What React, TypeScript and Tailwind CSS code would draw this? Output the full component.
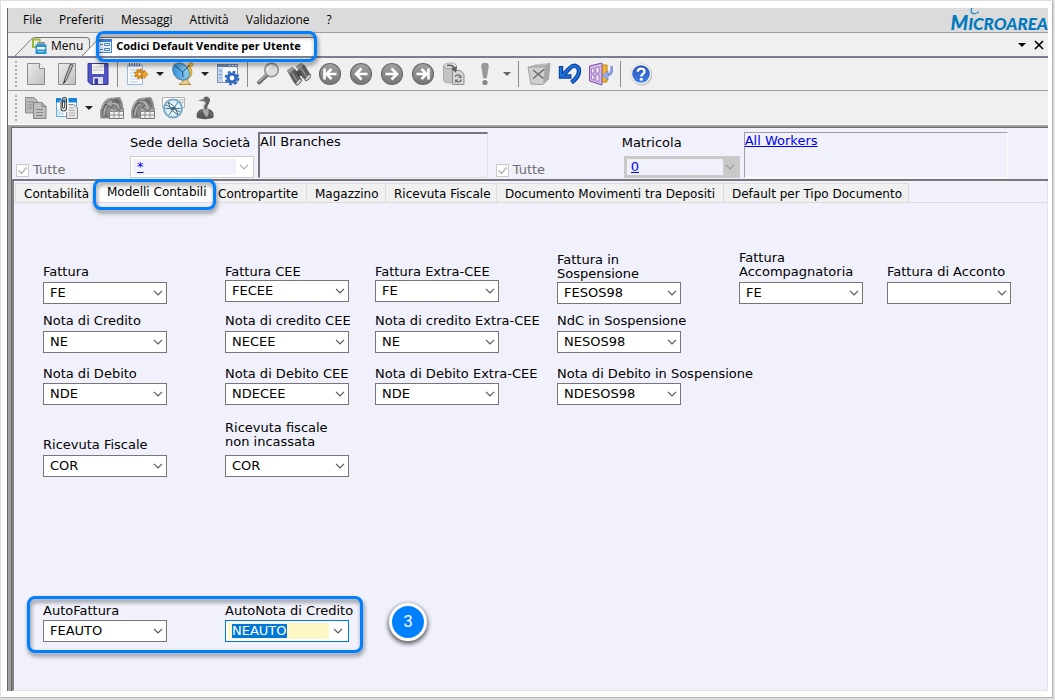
import type { ReactNode } from 'react';
import clsx from 'clsx';

const UI = "font-['Open_Sans','Noto_Sans',sans-serif]";

function Callout({ className }: { className: string }) {
  return (
    <span
      aria-hidden
      className={clsx(
        'pointer-events-none absolute z-10 rounded-lg border-3 border-[#0080ff] drop-shadow-[1px_3px_2px_rgba(0,0,0,0.5)]',
        className,
      )}
    />
  );
}

function Chevron({ className = 'text-[#555]' }: { className?: string }) {
  return (
    <svg viewBox="0 0 10 6" className={clsx('h-1.5 w-2.5', className)} fill="none" stroke="currentColor" strokeWidth="1.2" aria-hidden>
      <path d="M1 .8 5 4.8 9 .8" />
    </svg>
  );
}

/* ---------- toolbar icons, 24 x 24 ---------- */

function Svg({ children }: { children: ReactNode }) {
  return (
    <svg viewBox="0 0 24 24" className="size-6 shrink-0" fill="none" aria-hidden>
      {children}
    </svg>
  );
}

function NewIcon() {
  return (
    <Svg>
      <path d="M3.500 1.500h12L20.500 6.500v16h-17z" fill="url(#paper)" stroke="#8a8a8a" />
      <path d="M15.500 1.500v5h5" fill="#f8f8f8" stroke="#8a8a8a" />
    </Svg>
  );
}

function EditIcon() {
  return (
    <Svg>
      <path d="M3.500 1.500h17v21h-17z" fill="url(#paper)" stroke="#8f8f8f" />
      <path d="M15.500 2 10 16 8.500 21.500l3.500-4.500L18 3z" fill="#b5b5b5" stroke="#4c4c4c" strokeWidth=".9" />
      <path d="m8.300 22 1-3.500 1.500 1z" fill="#333" />
    </Svg>
  );
}

function SaveIcon() {
  return (
    <Svg>
      <path d="M2 1.500h20v21H5l-3-3z" fill="#5054c4" stroke="#35399c" />
      <path d="M6 2h12v10H6z" fill="#f4f4f4" />
      <path d="M7 5h10M7 8h10" stroke="#bbb" />
      <path d="M7 15h10v7H7z" fill="#dcdcec" />
      <path d="M8.500 16.500h3.500V22H8.500z" fill="#3a3f9f" />
    </Svg>
  );
}

function NotesIcon() {
  return (
    <Svg>
      <path d="M1.500 3h15v19.500h-15z" fill="#f6faff" stroke="#9db6d9" />
      <path d="M2 2.500h14v2H2z" fill="#b8cdea" />
      <path d="M3.500 1v3.500M6 1v3.500M8.500 1v3.500M11 1v3.500M13.500 1v3.500" stroke="#54719f" />
      <path d="M4 8h6M4 11h4M4 14h4M4 17h8M4 20h8" stroke="#b9cce6" />
      <circle cx="13.500" cy="12" r="2.800" stroke="#dc8f1c" strokeWidth="3.200" />
      <circle cx="13.500" cy="12" r="4.700" stroke="#b87312" strokeWidth="1.500" strokeDasharray="1.900 1.800" />
      <path d="M16 10.500h2V8l4 4.200-4 4.300V14h-2z" fill="#f0a92c" stroke="#b06a0c" strokeWidth=".6" />
    </Svg>
  );
}

function DishIcon() {
  return (
    <Svg>
      <path d="M13 16 11.500 20 8 22.500h12L17 20l-.500-5z" fill="#ecd28a" stroke="#a67c1b" strokeWidth=".8" />
      <path d="M17 3c5 4 5 10 1 13-3 2.500-8 2.500-12 .500z" fill="#eebd3e" stroke="#a67c1b" strokeWidth=".7" />
      <ellipse cx="10" cy="9.500" rx="7.300" ry="9.500" transform="rotate(-42 10 9.500)" fill="url(#dish)" stroke="#4d84b8" />
      <path d="m4.500 4 7 6L20 2M11.500 10l.5 5" stroke="#1c3f73" strokeWidth=".9" />
      <circle cx="20" cy="2.600" r="1.900" fill="#f3c33f" stroke="#a8791a" strokeWidth=".6" />
    </Svg>
  );
}

function WindowGearIcon() {
  return (
    <Svg>
      <path d="M1.500 2.500h20v18h-20z" fill="#fdfdff" stroke="#8593ab" />
      <path d="M1 2h21v3H1z" fill="#6c8ab8" />
      <path d="M13 3.500h1.500M16 3.500h1.500M19 3.500h1.500" stroke="#fff" />
      <path d="M2 6h5v14H2z" fill="#c5d6f0" />
      <path d="M3 9h3M3 12.500h3M3 16h3" stroke="#7a97c6" />
      <circle cx="16" cy="16" r="4" fill="#fff" stroke="#3268bf" strokeWidth="3.200" />
      <circle cx="16" cy="16" r="6.300" stroke="#3268bf" strokeWidth="2.200" strokeDasharray="2.550 2.400" />
    </Svg>
  );
}

function SearchIcon() {
  return (
    <Svg>
      <path d="M10.500 13.500 3 20.500" stroke="#707070" strokeWidth="4" strokeLinecap="round" />
      <path d="M10.500 12.500 3 19.500" stroke="#b4b4b4" strokeWidth="1.300" strokeLinecap="round" />
      <circle cx="15.500" cy="8" r="6.800" fill="#dedede" stroke="#8e8e8e" strokeWidth="1.500" />
      <path d="M11.500 8a4 4 0 0 1 4-4" stroke="#fff" strokeWidth="1.300" />
    </Svg>
  );
}

function BinocularsIcon() {
  return (
    <Svg>
      <path d="M0 8.500 5 5l4 3 6 10-5 5-3-2z" fill="#5e5e5e" />
      <path d="M9 4.500 14 1l4 2.500 6 10-4.500 4.500-4-2z" fill="#5e5e5e" />
      <path d="M0 8.500 5 5l2.500 1.500L3 11.500zM9 4.500 14 1l2.500 1.500L12 8z" fill="#9c9c9c" />
      <path d="M8 10 12 8l4 4-4 3z" fill="#4b4b4b" />
      <path d="m5 11 5.500 8.500M14 6l6 9" stroke="#8d8d8d" strokeWidth="1.500" />
      <ellipse cx="11.700" cy="20" rx="1.800" ry="4" transform="rotate(42 11.700 20)" fill="#cfcfcf" stroke="#4b4b4b" strokeWidth=".8" />
      <ellipse cx="21" cy="15.500" rx="1.800" ry="4" transform="rotate(42 21 15.500)" fill="#cfcfcf" stroke="#4b4b4b" strokeWidth=".8" />
    </Svg>
  );
}

function CircleArrow({ d }: { d: string }) {
  return (
    <Svg>
      <circle cx="12" cy="12" r="10.500" fill="url(#disc)" stroke="#6b6b6b" strokeWidth="1.200" />
      <path d={d} stroke="#fff" strokeWidth="2.600" />
    </Svg>
  );
}

function RefreshDataIcon() {
  return (
    <Svg>
      <path d="M1.500 4v14c0 2 3 3 6 3h3V8h4V4z" fill="#c3c3c3" stroke="#999" strokeWidth=".7" />
      <ellipse cx="8" cy="3.800" rx="6.500" ry="2.800" fill="#dcdcdc" stroke="#999" strokeWidth=".7" />
      <path d="M10.500 8.500h8l3.500 3.500v10.500H10.500z" fill="#d5d5d5" stroke="#8f8f8f" />
      <path d="M5 3.500c5-1 7.500 1.500 8 4.500" stroke="#5e5e5e" strokeWidth="1.700" />
      <path d="m9 7 5 3.500 1-6z" fill="#5e5e5e" />
      <path d="M13 14.500c2-2.500 5-1.500 5.500.500M19.500 17.500c-1 3-4.500 3-6 1" stroke="#737373" strokeWidth="1.400" />
      <path d="M19.500 12.500V16H16zM13 21v-3.500h3.500z" fill="#737373" />
    </Svg>
  );
}

function ExclamationIcon() {
  return (
    <Svg>
      <path d="M8.500 4a3.500 3 0 0 1 7 0L13.500 16h-3z" fill="#999" stroke="#858585" strokeWidth=".5" />
      <circle cx="12" cy="20.500" r="2.600" fill="#868686" />
    </Svg>
  );
}

function TrashIcon() {
  return (
    <Svg>
      <path d="M1 5 8 2.500 23 1l-1.500 16-6.500 6-11-.500z" fill="#b9b9b9" />
      <path d="M1 5c6 0 13 0 17-.5L23 1l-1.500 16L16 22.500 4 22z" fill="#cfcfcf" stroke="#969696" strokeWidth=".8" />
      <path d="m18 4.500-2 18 5.500-5.500L23 1z" fill="#a7a7a7" />
      <path d="m6 8 10.500 8.500M17.500 7 6 16.500" stroke="#666" strokeWidth="1.200" />
    </Svg>
  );
}

function UndoIcon() {
  return (
    <Svg>
      <path d="M3 4v10.500h10.500M4.500 13.500 12 6c4-4 9.500-2 9 3.500-.3 4.500-3.500 8-7.500 11" stroke="#0b409b" strokeWidth="4.400" />
      <path d="M3 5v9.500h9.500M4.500 13.500 12 6c4-4 9.500-2 9 3.500-.3 4.500-3.500 7.500-7 10.500" stroke="#1b72dc" strokeWidth="2.200" />
    </Svg>
  );
}

function ExitIcon() {
  return (
    <Svg>
      <path d="M12 3h6v17h-6z" fill="#f6b828" stroke="#b9821a" />
      <path d="M.5 4 13 1v22L.5 19z" fill="#d4b8ea" stroke="#7a4fa5" />
      <path d="M2.500 6.500 5 6v5H2.500zM2.500 13H5v5l-2.500-.7zM7 5.500l3-.5v6H7zM7 13h3v6.500L7 18.800z" fill="#f7f0ff" stroke="#8758ae" strokeWidth=".7" />
      <path d="M22.500 4c1 5-.5 8.500-4.500 9.500" stroke="#8499dc" strokeWidth="2.800" />
      <path d="M19 9v9L13 13.500z" fill="#9badea" stroke="#6177bc" strokeWidth=".6" />
    </Svg>
  );
}

function HelpIcon() {
  return (
    <Svg>
      <circle cx="12.600" cy="12.800" r="10.600" fill="#b9b9b9" />
      <circle cx="12" cy="12" r="10.300" fill="#fff" stroke="#cfcfcf" strokeWidth=".7" />
      <circle cx="12" cy="12" r="8.800" fill="url(#help)" />
      <path d="M8.800 9.700c0-4.200 6.700-4 6.700-.3 0 2.500-3.200 2.400-3.200 5.100" stroke="#fff" strokeWidth="2.400" />
      <circle cx="12.300" cy="17.300" r="1.500" fill="#fff" />
    </Svg>
  );
}

function CopyIcon() {
  return (
    <Svg>
      <path d="M1.500 1.500H10l3.500 3.500V17h-12z" fill="#b9b9b9" stroke="#8b8b8b" />
      <path d="M3.500 6h6M3.500 9h5M3.500 12h5" stroke="#8c8c8c" />
      <path d="M9.500 6.500H18l4 4v12H9.500z" fill="#bfbfbf" stroke="#838383" />
      <path d="M18 6.500v4h4M12 13.500h7M12 16.500h7M12 19.500h7" stroke="#868686" />
    </Svg>
  );
}

function ClipWindowIcon() {
  return (
    <Svg>
      <path d="M1.500 2.500h20v18h-20z" fill="#fff" stroke="#5ba7e4" />
      <path d="M1 2h21v4.500H1z" fill="#1583d8" />
      <path d="M2.500 13H9v6H2.500z" fill="#c4e0f8" />
      <path d="M11.500 8.500h7l4 3v11h-11z" fill="#e4e4e4" stroke="#8a8a8a" />
      <path d="M14 12h5M14 14.500h6M14 17h6M14 19.500h6" stroke="#b5b5b5" />
      <path d="M6 4.500V12c0 4.500 6 4.500 6 0V3.500c0-3.500-4.500-3-4.500 0" stroke="#fff" strokeWidth="3" />
      <path d="M6 4.500V12c0 4 5.500 4 5.500 0V3.500c0-3-4-3-4 0V11c0 1.500 2.200 1.500 2.200 0V4.500" stroke="#444" strokeWidth="1.100" />
    </Svg>
  );
}

function GlobeTableIcon({ flip = false }: { flip?: boolean }) {
  return (
    <Svg>
      <path d="M.5 22.500C-1 13 2 5 9 2l11-1 2.500 5.500 1 6.500H10v9.500z" fill="#8b8b8b" />
      <path d="M2 15c0-5 2-8 6-10l1 5-4 5 3 6H2.500zM12 3l6-.5 3 5-6 .5z" fill="#6c6c6c" />
      <path d="M1.500 13C3 7 8 3 14 2.500M4 20c-.5-5 1-9 5-12" stroke="#b9b9b9" strokeWidth="1.200" />
      <path d="M9.500 12.500h14v10h-14z" fill="#f1f1f1" stroke="#777" />
      <path d="M9.500 12.500h14V15h-14z" fill="#a5a5a5" />
      <path d="M9.500 15.500h14M9.500 19h14M14 12.500v10M19 12.500v10" stroke="#8c8c8c" />
      {flip ? (
        <path d="M7 5c6-2 10 0 11 5l3-1-4 6-6-4 3-.6C13 7 11 6 7 7z" fill="#a8a8a8" stroke="#4f4f4f" strokeWidth=".7" />
      ) : (
        <path d="M20 14c1-6-3-8.500-8-8V3L5 7.500l7 4.500V9c4-.500 5.500 1.500 5 5z" fill="#a8a8a8" stroke="#4f4f4f" strokeWidth=".7" />
      )}
    </Svg>
  );
}

function CompassIcon() {
  return (
    <Svg>
      <path d="M.5 1.500h22v10h-22z" fill="#fbfbfb" stroke="#b3b3b3" />
      <path d="M13 3.500h3v3h-3zM18 3.500h3v3h-3z" stroke="#b9b9b9" />
      <circle cx="11" cy="12.500" r="9" fill="#e0f0f8" stroke="#77abc8" strokeWidth="2" />
      <path d="m6 6 3.500 8L16 19l-3-8z" fill="#fff" stroke="#41687c" />
      <path d="m16 6-9 13M3.500 12.500h15M4 9l14 7" stroke="#41687c" strokeWidth=".9" />
      <circle cx="11" cy="12.500" r="1.700" fill="#346b85" />
    </Svg>
  );
}

function GooseIcon() {
  return (
    <Svg>
      <path d="M4 22c-1.500-4 1-8.500 6-9l5-.5c4.500 1.500 7 5.500 5 9.500-5 1.500-11 1.500-16 0z" fill="#585858" />
      <path d="M9.500 13.500c0 3 2 5 4.500 8 1.500-2.500 2-5 1.500-8.500z" fill="#a9a9a9" />
      <path d="M15 3c1.500 3-3.500 5-2.500 10" stroke="#5f5f5f" strokeWidth="3.600" />
      <path d="M12.500 6.500c-1.500 2-2.500 4-2 7.500" stroke="#c4c4c4" strokeWidth="1.300" />
      <circle cx="13.300" cy="3.300" r="2.800" fill="#666" />
      <path d="m11.500 2.500-6.500 2 7 1.300z" fill="#7c7c7c" />
      <path d="M6 17.500c1.500-2 3-2.500 4.500-2M16.500 16c1.500.500 2 2 2 4" stroke="#858585" />
    </Svg>
  );
}

function Defs() {
  return (
    <svg className="absolute size-0" aria-hidden>
      <defs>
        <linearGradient id="paper" x1="0" y1="0" x2="1" y2="1">
          <stop offset="0" stopColor="#ececec" />
          <stop offset="1" stopColor="#c0c0c0" />
        </linearGradient>
        <linearGradient id="disc" x1="0" y1="0" x2="0" y2="1">
          <stop offset="0" stopColor="#a2a2a2" />
          <stop offset="1" stopColor="#757575" />
        </linearGradient>
        <linearGradient id="help" x1="0" y1="0" x2="0" y2="1">
          <stop offset="0" stopColor="#2450b8" />
          <stop offset="1" stopColor="#4381e8" />
        </linearGradient>
        <linearGradient id="dish" x1="0" y1="0" x2="1" y2="1">
          <stop offset="0" stopColor="#1f7fd2" />
          <stop offset="1" stopColor="#a7e2fb" />
        </linearGradient>
      </defs>
    </svg>
  );
}

/* ---------- toolbar ---------- */

function ToolButton({ label, children }: { label: string; children: ReactNode }) {
  return (
    <button type="button" aria-label={label} className="flex h-7 w-[31px] items-center justify-center">
      {children}
    </button>
  );
}

function DropArrow({ dim = false }: { dim?: boolean }) {
  return (
    <button type="button" aria-label="Altre opzioni" className="flex h-7 w-3.5 items-center justify-center">
      <svg viewBox="0 0 8 4" className={clsx('h-1 w-2', dim ? 'text-[#666]' : 'text-[#222]')} aria-hidden>
        <path d="M0 0h8L4 4z" fill="currentColor" />
      </svg>
    </button>
  );
}

function Separator() {
  return (
    <span className="flex w-[9px] justify-center">
      <span className="h-[26px] w-px bg-[#8c8c8c]" />
    </span>
  );
}

function Toolbar({ className, children }: { className?: string; children: ReactNode }) {
  return (
    <div role="toolbar" className={clsx('flex items-center border-b pl-[7px]', className)}>
      <span className="mr-[3px] h-[26px] w-0.5 bg-[repeating-linear-gradient(#b4b4b4_0_2px,transparent_2px_4px)]" />
      {children}
    </div>
  );
}

/* ---------- window tabs ---------- */

function MenuTabIcon() {
  return (
    <svg viewBox="0 0 16 16" className="size-4" aria-hidden>
      <path d="M1 .5h8.500V10H1z" fill="#9bb83a" />
      <path d="M3 2.500h5V8H3z" fill="#eef3d9" />
      <path d="M6 4h8v4H6z" fill="#8c9aa3" />
      <path d="M4.500 6.500h11V16h-11z" fill="#2b93cf" />
      <path d="M6 9h8v2.500H6z" fill="#e8f5fc" />
      <path d="M7 13.500h6" stroke="#9fd0ec" />
    </svg>
  );
}

function FormTabIcon() {
  return (
    <svg viewBox="0 0 14 14" className="size-3.5" aria-hidden>
      <path d="M0 0h14v14H0z" fill="#3f83d6" />
      <path d="M1 3h12v10H1z" fill="#e6f1fd" />
      <path d="M2 5.500h3M2 10.500h3" stroke="#3f83d6" />
      <path d="M6.500 4.500h5v2h-5zM6.500 9.500h5v2h-5z" fill="#fff" stroke="#3f83d6" />
    </svg>
  );
}

function Slope({ className, fill }: { className?: string; fill: string }) {
  return (
    <svg viewBox="0 0 20 19" className={clsx('h-[19px] w-5 shrink-0', className)} aria-hidden>
      <path d="M0 19 16 2.500Q18 .5 20 .5V19z" fill={fill} />
      <path d="M0 19 16 2.500Q18 .5 20 .5" fill="none" stroke="#777" />
    </svg>
  );
}

/* ---------- form ---------- */

type FieldProps = { id: string; label: ReactNode; value: string; gap?: string; className?: string };

function Field({ id, label, value, gap = 'gap-[3px]', className }: FieldProps) {
  return (
    <div className={clsx('flex w-[124px] flex-col', gap, className)}>
      <label htmlFor={id} className="leading-[14px] whitespace-nowrap">
        {label}
      </label>
      <span className="relative flex items-center">
        <select id={id} defaultValue={value} className="h-[22px] w-full appearance-none border border-[#767676] bg-white pr-5 pl-1.5 leading-4">
          <option>{value}</option>
        </select>
        <span className="pointer-events-none absolute right-1">
          <Chevron />
        </span>
      </span>
    </div>
  );
}

const GRID =
  'grid grid-cols-[minmax(0,182fr)_minmax(0,150fr)_minmax(0,182fr)_minmax(0,182fr)_minmax(0,148fr)_minmax(0,160fr)] items-end';

const menuItems = ['File', 'Preferiti', 'Messaggi', 'Attività', 'Validazione', '?'];
const laterTabs = ['Contropartite', 'Magazzino', 'Ricevuta Fiscale', 'Documento Movimenti tra Depositi', 'Default per Tipo Documento'];

function MenuBar() {
  return (
    <nav className={clsx('flex h-[25px] items-center justify-between border-b border-[#a0a0a0] bg-[#dbdbdb] pl-[15px] text-xs', UI)}>
      <div className="flex gap-[17px]">
        {menuItems.map((m) => (
          <button key={m} type="button">
            {m}
          </button>
        ))}
      </div>
      <div className="relative pt-1 font-['Lato',sans-serif] text-[17px] leading-6 font-black text-[#0079bf] italic">
        <span className="text-xl">M</span>ICROAREA
        <svg viewBox="0 0 10 10" className="absolute top-0.5 left-5 size-2.5" fill="none" aria-hidden>
          <path d="M3 0C-1 6 2 10 9 6" stroke="#2c8fcb" strokeWidth="1.400" />
        </svg>
      </div>
    </nav>
  );
}

function WindowTabs() {
  return (
    <div className={clsx('flex h-[25px] items-end border-b-2 border-[#7c7c94] bg-[#f0f0f0] pl-[7px] text-xs', UI)}>
      <Slope fill="#ececec" />
      <button type="button" className="flex h-[19px] items-center gap-1 rounded-tr-sm border-t border-r border-[#777] bg-[#ececec] pr-1.5 pb-0.5">
        <span className="-ml-1">
          <MenuTabIcon />
        </span>
        Menu
      </button>
      <Slope fill="#fff" className="-ml-2" />
      <div className="relative -ml-1 flex">
        <button type="button" className="flex h-[19px] items-center gap-1 border-t border-[#777] bg-white pr-3.5 pb-0.5 text-[11px] font-bold whitespace-nowrap">
          <FormTabIcon />
          Codici Default Vendite per Utente
        </button>
        <Callout className="-top-1.5 -right-0.5 -bottom-1.5 -left-0.5" />
      </div>
      <div className="ml-auto flex items-center gap-2 self-center pr-1">
        <button type="button" aria-label="Elenco schede">
          <svg viewBox="0 0 8 4" className="h-1 w-2" aria-hidden>
            <path d="M0 0h8L4 4z" />
          </svg>
        </button>
        <button type="button" aria-label="Chiudi">
          <svg viewBox="0 0 10 10" className="size-2.5" stroke="#000" strokeWidth="1.700" aria-hidden>
            <path d="m1 1 8 8M9 1 1 9" />
          </svg>
        </button>
      </div>
    </div>
  );
}

function AllCheck({ id, className }: { id: string; className: string }) {
  return (
    <div className={clsx('flex shrink-0 items-center gap-1 self-end text-[#6d6d6d]', className)}>
      <span className="relative flex size-[13px]">
        <input
          id={id}
          type="checkbox"
          defaultChecked
          disabled
          className="size-[13px] appearance-none border border-[#c8c8c8] bg-white"
        />
        <svg viewBox="0 0 13 13" className="pointer-events-none absolute inset-0" fill="none" stroke="#b5b5b5" strokeWidth="1.500" aria-hidden>
          <path d="m2.500 6.500 3 3 5-6" />
        </svg>
      </span>
      <label htmlFor={id} className="leading-4">
        Tutte
      </label>
    </div>
  );
}

function HeaderPanel() {
  return (
    <section className="flex border-b-2 border-[#77777d] pt-1 pb-px pl-1">
      <AllCheck id="all-branches" className="w-[114px]" />
      <div className="flex h-[46px] shrink-0 flex-col justify-between">
        <label htmlFor="branch" className="pt-1 leading-[14px]">
          Sede della Società
        </label>
        <div className="flex h-[22px] w-[124px] border border-[#ccc] bg-white p-0.5">
          <input id="branch" defaultValue="*" readOnly className="w-[103px] bg-[#f1f1fb] pl-1 text-[#0000f0] underline" />
          <button type="button" aria-label="Apri elenco sedi" className="flex flex-1 items-center justify-center">
            <Chevron className="text-[#aaa]" />
          </button>
        </div>
      </div>
      <div className="ml-1 h-[46px] flex-[229_1_0] border-t-2 border-r border-b border-l-2 border-t-[#77777b] border-r-[#e0e0e0] border-b-[#e0e0e0] border-l-[#77777b] leading-4">
        All Branches
      </div>
      <AllCheck id="all-workers" className="ml-2 w-32" />
      <div className="flex h-[46px] shrink-0 flex-col justify-between">
        <label htmlFor="worker" className="-ml-0.5 pt-1 leading-[14px]">
          Matricola
        </label>
        <div className="flex h-[22px] w-[116px] border-3 border-[#c9c9c9] bg-[#c9c9c9]">
          <input id="worker" defaultValue="0" readOnly className="w-24 bg-[#f1f1fb] pl-1 text-[#0000f0] underline" />
          <button type="button" aria-label="Apri elenco matricole" className="flex flex-1 items-center justify-center">
            <Chevron className="text-[#999]" />
          </button>
        </div>
      </div>
      <div className="mr-10 ml-1 h-[46px] flex-[265_1_0] border border-t-[#a0a0a0] border-r-white border-b-white border-l-[#a0a0a0] leading-4">
        <a href="#workers" className="text-[#0000f0] underline">
          All Workers
        </a>
      </div>
    </section>
  );
}

// width of each tab after the selected one
const tabWidths = ['w-[93px] pl-1', 'w-[79px] pl-2', 'w-[111px] pl-2', 'w-[227px] pl-2', 'w-[185px] pl-2'];

function FormTabs() {
  return (
    <div role="tablist" className="flex border-b border-[#dcdcdc] text-xs">
      <button type="button" role="tab" className="h-[19px] w-20 border-t border-l border-[#dcdcdc] bg-[#f0f0f0] pt-px pl-2 text-left whitespace-nowrap">
        Contabilità
      </button>
      <div className="relative flex">
        <button type="button" role="tab" aria-selected className="h-[19px] w-[119px] bg-white pb-0.5 pl-3 text-left whitespace-nowrap">
          Modelli Contabili
        </button>
        <Callout className="-top-1 -right-0.5 -bottom-2 -left-0.5" />
      </div>
      {laterTabs.map((t, i) => (
        <button
          key={t}
          type="button"
          role="tab"
          className={clsx('h-[19px] border-t border-r border-[#dcdcdc] bg-[#f0f0f0] pt-px text-left whitespace-nowrap', tabWidths[i])}
        >
          {t}
        </button>
      ))}
    </div>
  );
}

function AccountingForm() {
  return (
    <form className="flex flex-1 flex-col pt-12 pb-[47px] pl-7">
      <div className={GRID}>
        <Field id="f1" label="Fattura" value="FE" />
        <Field id="f2" label="Fattura CEE" value="FECEE" gap="gap-px" className="pb-0.5" />
        <Field id="f3" label="Fattura Extra-CEE" value="FE" gap="gap-px" className="pb-0.5" />
        <Field
          id="f4"
          label={
            <>
              Fattura in
              <br />
              Sospensione
            </>
          }
          gap="gap-px"
          value="FESOS98"
        />
        <Field
          id="f5"
          label={
            <>
              Fattura
              <br />
              Accompagnatoria
            </>
          }
          value="FE"
        />
        <Field id="f6" label="Fattura di Acconto" value="" />
      </div>
      <div className={clsx(GRID, 'mt-2.5')}>
        <Field id="c1" label="Nota di Credito" value="NE" />
        <Field id="c2" label="Nota di credito CEE" value="NECEE" />
        <Field id="c3" label="Nota di credito Extra-CEE" value="NE" />
        <Field id="c4" label="NdC in Sospensione" value="NESOS98" />
      </div>
      <div className={clsx(GRID, 'mt-3.5')}>
        <Field id="d1" label="Nota di Debito" value="NDE" gap="gap-0.5" />
        <Field id="d2" label="Nota di Debito CEE" value="NDECEE" gap="gap-0.5" />
        <Field id="d3" label="Nota di Debito Extra-CEE" value="NDE" gap="gap-0.5" />
        <Field id="d4" label="Nota di Debito in Sospensione" value="NDESOS98" gap="gap-0.5" />
      </div>
      <div className={clsx(GRID, 'mt-4')}>
        <Field id="r1" label="Ricevuta Fiscale" value="COR" />
        <Field
          id="r2"
          label={
            <>
              Ricevuta fiscale
              <br />
              non incassata
            </>
          }
          value="COR"
          gap="gap-1.5"
        />
      </div>

      <div className="mt-auto flex items-center gap-10">
        <div className="relative flex gap-[58px]">
          <Field id="a1" label="AutoFattura" value="FEAUTO" gap="gap-0.5" />
          <div className="flex w-[124px] flex-col gap-0.5">
            <label htmlFor="a2" className="leading-[14px] whitespace-nowrap">
              AutoNota di Credito
            </label>
            <div className="flex h-[22px] border border-[#0078d7] bg-white p-0.5">
              <div className="flex w-[101px] items-center bg-[#fdf7c6] pl-1">
                <input id="a2" defaultValue="NEAUTO" className="field-sizing-content h-3.5 bg-[#0078d7] text-white outline-none" />
              </div>
              <button type="button" aria-label="Apri elenco" className="flex flex-1 items-center justify-center">
                <Chevron />
              </button>
            </div>
          </div>
          <Callout className="-top-2 -right-3.5 -bottom-[11px] -left-4" />
        </div>
        <span className="mb-0.5 flex size-[38px] items-center justify-center rounded-full border-3 border-white bg-[#0080ff] font-['Liberation_Sans',sans-serif] text-base text-white shadow-[0_2px_4px_1px_rgba(0,0,0,0.6)]">
          3
        </span>
      </div>
    </form>
  );
}

export default function App() {
  return (
    <div className="flex min-h-screen bg-[#dedede] pt-px pr-0.5 pb-0.5 pl-px text-[13px] text-black">
      <Defs />
      <div className="flex min-w-0 flex-1 flex-col border-r border-b border-[#b0b0b0] bg-white pt-[7px] pr-1 pb-1.5 pl-1.5">
        <div className="flex flex-1 flex-col overflow-hidden border-l border-[#696969] bg-[#f0f0f0] font-['DejaVu_Sans',Verdana,sans-serif]">
          <MenuBar />
          <WindowTabs />
          <Toolbar className="h-[33px] border-[#a0a0a0]">
            <ToolButton label="Nuovo"><NewIcon /></ToolButton>
            <ToolButton label="Modifica"><EditIcon /></ToolButton>
            <ToolButton label="Salva"><SaveIcon /></ToolButton>
            <Separator />
            <ToolButton label="Note"><NotesIcon /></ToolButton>
            <DropArrow />
            <ToolButton label="Radar"><DishIcon /></ToolButton>
            <DropArrow />
            <ToolButton label="Opzioni"><WindowGearIcon /></ToolButton>
            <Separator />
            <ToolButton label="Cerca"><SearchIcon /></ToolButton>
            <ToolButton label="Trova"><BinocularsIcon /></ToolButton>
            <ToolButton label="Primo"><CircleArrow d="M18.500 12H9.500M13.500 7l-5 5 5 5M6.500 6.500v11" /></ToolButton>
            <ToolButton label="Precedente"><CircleArrow d="M18.500 12H7.500M12.500 6.500 7 12l5.500 5.500" /></ToolButton>
            <ToolButton label="Successivo"><CircleArrow d="M5.500 12h11M11.500 6.500 17 12l-5.500 5.500" /></ToolButton>
            <ToolButton label="Ultimo"><CircleArrow d="M5.500 12h9M10.500 7l5 5-5 5M17.500 6.500v11" /></ToolButton>
            <ToolButton label="Aggiorna dati"><RefreshDataIcon /></ToolButton>
            <ToolButton label="Esegui"><ExclamationIcon /></ToolButton>
            <DropArrow dim />
            <Separator />
            <ToolButton label="Elimina"><TrashIcon /></ToolButton>
            <ToolButton label="Annulla"><UndoIcon /></ToolButton>
            <ToolButton label="Esci"><ExitIcon /></ToolButton>
            <Separator />
            <ToolButton label="Aiuto"><HelpIcon /></ToolButton>
          </Toolbar>
          <Toolbar className="h-[34px] border-white">
            <ToolButton label="Copia"><CopyIcon /></ToolButton>
            <ToolButton label="Allegati"><ClipWindowIcon /></ToolButton>
            <DropArrow />
            <ToolButton label="Importa"><GlobeTableIcon /></ToolButton>
            <ToolButton label="Esporta"><GlobeTableIcon flip /></ToolButton>
            <ToolButton label="Naviga"><CompassIcon /></ToolButton>
            <ToolButton label="Oca"><GooseIcon /></ToolButton>
          </Toolbar>
          <div className="flex flex-1 flex-col border-t-2 border-l-3 border-[#a0a0a0]">
            <div className="flex flex-1 flex-col border-t border-l border-[#696969] bg-[#f1f1fb]">
              <HeaderPanel />
              <div className="flex flex-1 flex-col border-r border-b border-l-2 border-r-[#e3e3e3] border-b-[#e3e3e3] border-l-[#808080] pt-0.5 pl-px">
                <FormTabs />
                <AccountingForm />
              </div>
            </div>
          </div>
        </div>
      </div>
    </div>
  );
}
